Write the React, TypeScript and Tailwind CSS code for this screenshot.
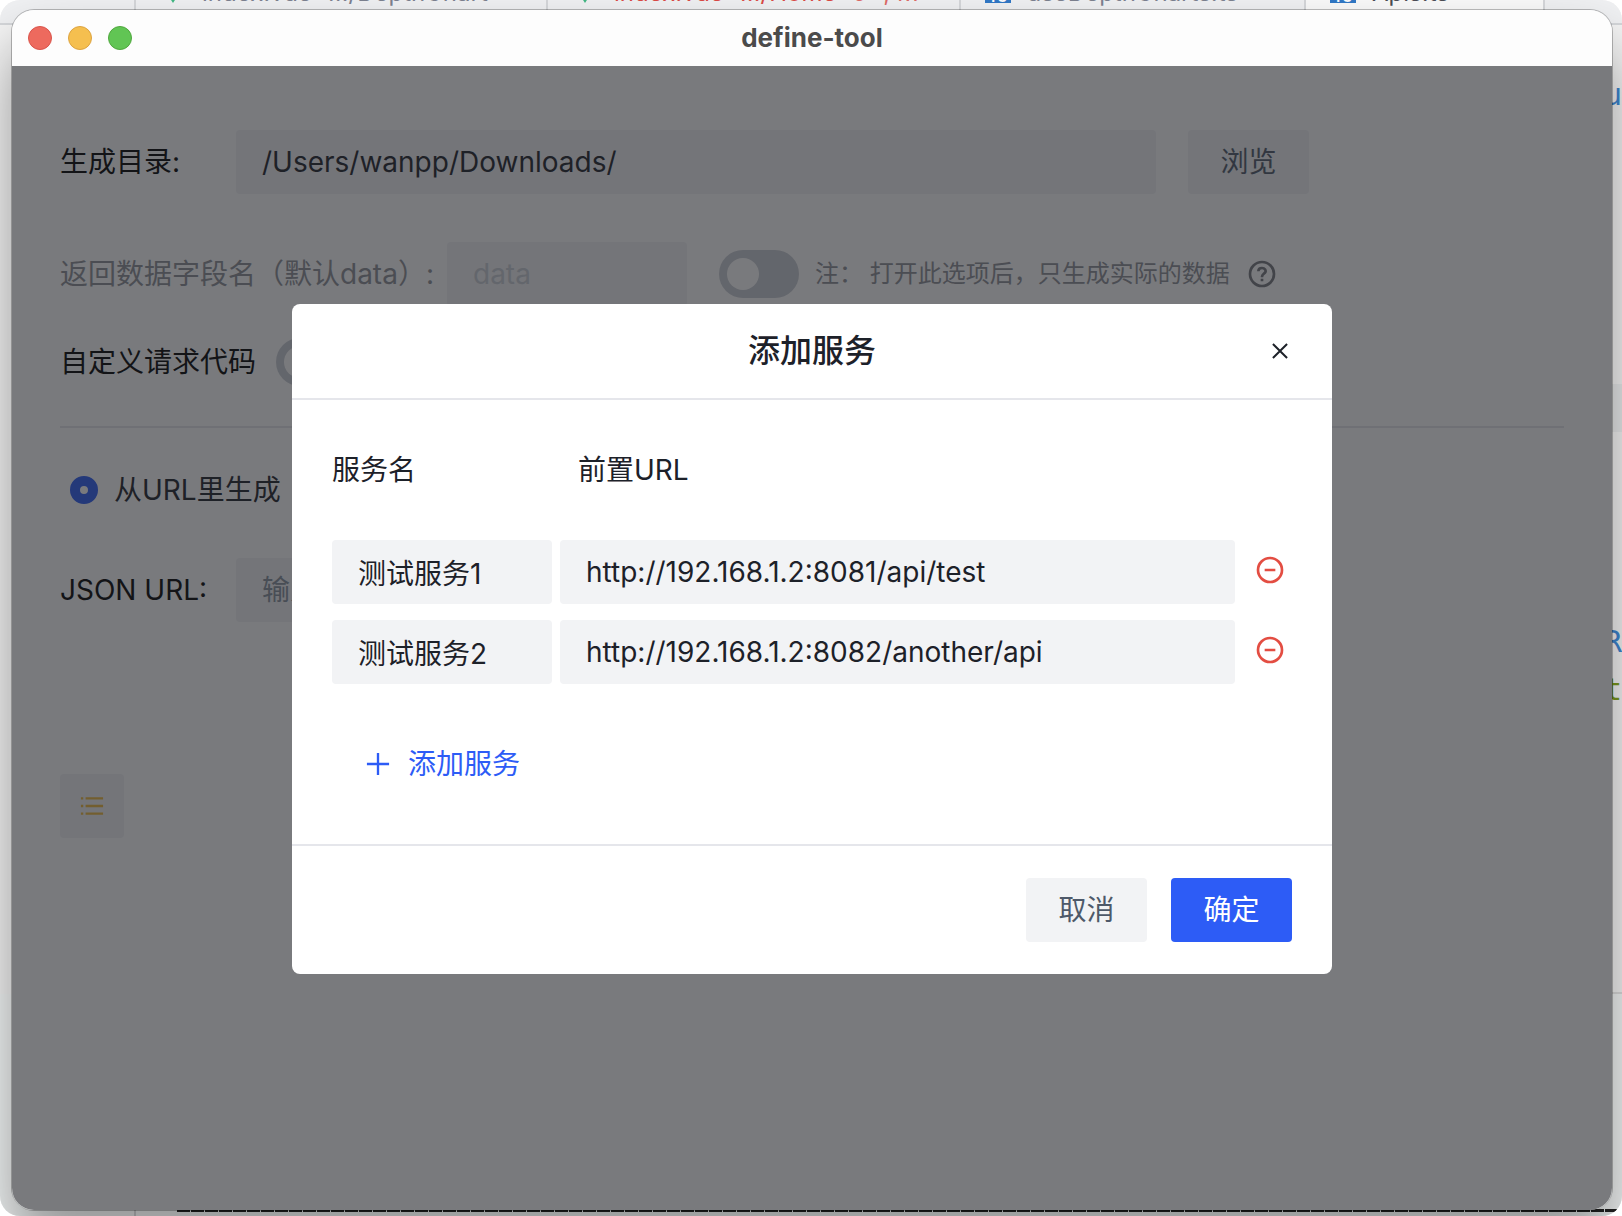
import React, { useState } from "react";

type Service = {
  name: string;
  url: string;
};

type IconProps = {
  d: string;
  className: string;
};

const ICONS = {
  plus: "M5 24h38M24 5v38",
  close: "M9.857 9.858 24 24m0 0 14.142 14.142M24 24 38.142 9.858M24 24 9.857 38.142",
  minusCircle: "M42 24c0 9.941-8.059 18-18 18S6 33.941 6 24 14.059 6 24 6s18 8.059 18 18ZM32 24H16",
  list: "M13 24h30M5 11h4m4 26h30M13 11h30M5 24h4M5 37h4",
  question:
    "M42 24c0 9.941-8.059 18-18 18S6 33.941 6 24 14.059 6 24 6s18 8.059 18 18ZM24.006 31v4.008m0-6.008L24 28c0-3 3-4 4.78-6.402C30.558 19.195 28.288 15 23.987 15c-4.014 0-5.382 2.548-5.388 4.514v.465",
};

const inputClass = "h-16 rounded bg-[#f2f3f5] px-[26px] text-[#1d2129] outline-none";
const switchClass =
  "h-12 w-20 shrink-0 appearance-none rounded-full bg-[#c9cdd4] p-2 before:block before:size-8 before:rounded-full before:bg-white checked:bg-[#165dff] checked:before:ml-8";

function Icon({ d, className }: IconProps) {
  return (
    <svg viewBox="0 0 48 48" fill="none" stroke="currentColor" strokeWidth="4" className={className} aria-hidden="true">
      <path d={d} />
    </svg>
  );
}

function VueIcon() {
  return (
    <svg viewBox="0 0 26 20" className="h-5 w-[26px]" aria-hidden="true">
      <path d="M0 0h5l8 13 8-13h5L13 20Z" fill="#41b883" />
      <path d="M5 0h5l3 5 3-5h5l-8 13Z" fill="#35495e" />
    </svg>
  );
}

function TsIcon() {
  return <span className="flex h-5 w-[26px] items-end justify-end bg-[#3178c6] px-1 text-sm leading-3 font-bold text-white">TS</span>;
}

// editor window that peeks out around the app window
function Backdrop() {
  return (
    <div className="absolute inset-0 flex flex-col overflow-hidden rounded-[20px] bg-[#f5f5f5]">
      <div className="-mt-[37px] flex h-[62px] shrink-0 border-b-2 border-[#d5d7da] bg-[#f0f1f3] pl-[134px] text-2xl whitespace-nowrap text-[#7d8290]">
        <div className="flex w-[412px] items-center gap-4 border-l-2 border-[#d5d7da] pl-6">
          <VueIcon />
          <span>index.vue</span>
          <span>…/DepthChart</span>
        </div>
        <div className="flex w-[413px] items-center gap-4 border-l-2 border-[#d5d7da] pl-6 text-[#dc4a45]">
          <VueIcon />
          <span>index.vue</span>
          <span>…/Home</span>
          <span className="opacity-80">9+, M</span>
        </div>
        <div className="flex w-[345px] items-center gap-4 border-l-2 border-[#d5d7da] pl-6">
          <TsIcon />
          <span>useDepthCharts.ts</span>
        </div>
        <div className="flex w-[241px] items-center gap-4 border-x-2 border-[#d5d7da] bg-[#fafafa] pl-6 text-[#4b4d55]">
          <TsIcon />
          <span>Apis.ts</span>
        </div>
      </div>
      <div className="flex flex-1 flex-col items-end font-['DejaVu_Sans_Mono',monospace] text-[30px] leading-[48px]">
        <span className="mt-[46px] text-[#3d86d0]">u</span>
        <div className="mt-[265px] h-12 w-1/2 bg-[#e9ebec]"></div>
        <span className="mt-[186px] text-[#3d86d0]">R</span>
        <span className="text-[#7a9a1c]">t</span>
        <div className="mt-auto h-0.5 w-1/2 bg-[#dcdcdc]"></div>
      </div>
      <div className="flex h-[222px] shrink-0 flex-col justify-end bg-[#f3f6f6] pr-1 pl-[134px]">
        <div className="h-[7px] border-l-2 border-[#d0d2d4] pl-[41px]">
          <div className="h-[3px] bg-[repeating-linear-gradient(90deg,#222_0_13px,transparent_13px_14px)]"></div>
        </div>
      </div>
    </div>
  );
}

function SettingsForm() {
  return (
    <form className="px-12 pt-16 text-black">
      <div className="flex h-16 items-center">
        <label htmlFor="dir" className="w-44 shrink-0">生成目录:</label>
        <input id="dir" defaultValue="/Users/wanpp/Downloads/" className={`${inputClass} w-full max-w-[920px]`} />
        <button type="button" className="ml-8 h-16 w-[121px] shrink-0 rounded bg-[#f2f3f5] text-[#4e5969]">浏览</button>
      </div>
      <div className="mt-12 flex h-16 items-center whitespace-nowrap text-[#8d8f96]">
        <label htmlFor="field" className="w-[387px] shrink-0">返回数据字段名（默认data）:</label>
        <input id="field" placeholder="data" className={`${inputClass} w-60 placeholder:text-[#c9cdd4]`} />
        <input id="raw" type="checkbox" role="switch" className={`${switchClass} ml-8`} />
        <label htmlFor="raw" className="ml-4 text-2xl">注： 打开此选项后，只生成实际的数据</label>
        <Icon d={ICONS.question} className="ml-4 size-8 text-[#77787e]" />
      </div>
      <div className="mt-8 flex h-12 items-center gap-5">
        <label htmlFor="custom">自定义请求代码</label>
        <input id="custom" type="checkbox" role="switch" className={switchClass} />
      </div>
      <hr className="mt-10 border-t-2 border-[#e5e6eb]" />
      <div className="mt-8 flex h-[60px] items-center gap-4 pl-[10px] text-[#1d2129]">
        <input id="from-url" type="radio" name="source" defaultChecked className="size-7 appearance-none rounded-full border-[10px] border-[#2b5cf6] bg-white" />
        <label htmlFor="from-url">从URL里生成</label>
      </div>
      <div className="mt-[38px] flex h-16 items-center">
        <label htmlFor="json-url" className="w-44 shrink-0">JSON URL:</label>
        <input id="json-url" placeholder="输入" className={`${inputClass} w-full max-w-[920px] placeholder:text-[#86909c]`} />
      </div>
      <button type="button" aria-label="列表" className="mt-[152px] flex size-16 items-center justify-center rounded bg-[#f2f3f5] text-[#f0b93c]">
        <Icon d={ICONS.list} className="size-7" />
      </button>
    </form>
  );
}

function ServiceDialog() {
  const [services, setServices] = useState<Service[]>([
    { name: "测试服务1", url: "http://192.168.1.2:8081/api/test" },
    { name: "测试服务2", url: "http://192.168.1.2:8082/another/api" },
  ]);

  const update = (index: number, patch: Partial<Service>) =>
    setServices(services.map((s, i) => (i === index ? { ...s, ...patch } : s)));

  return (
    <div role="dialog" aria-labelledby="dialog-title" className="w-full max-w-[1040px] rounded-lg bg-white text-[#1d2129]">
      <header className="flex h-24 items-center border-b-2 border-[#e5e6eb] px-10">
        <span className="w-6"></span>
        <h2 id="dialog-title" className="flex-1 text-center text-[32px] font-medium">添加服务</h2>
        <button type="button" aria-label="关闭">
          <Icon d={ICONS.close} className="size-6" />
        </button>
      </header>
      <div className="px-10 pt-10 pb-12">
        <div className="mb-10 flex h-[60px] items-center">
          <span className="w-[246px]">服务名</span>
          <span>前置URL</span>
        </div>
        <div className="flex flex-col gap-4">
          {services.map((s, i) => (
            <div key={i} className="flex items-center gap-2">
              <input
                aria-label="服务名"
                value={s.name}
                onChange={(e) => update(i, { name: e.target.value })}
                className={`${inputClass} w-[220px]`}
              />
              <input
                aria-label="前置URL"
                value={s.url}
                onChange={(e) => update(i, { url: e.target.value })}
                className={`${inputClass} min-w-0 flex-1`}
              />
              <button
                type="button"
                aria-label="删除"
                onClick={() => setServices(services.filter((_, n) => n !== i))}
                className="mr-[6px] ml-[11px] pb-1 text-[#e34d42]"
              >
                <Icon d={ICONS.minusCircle} className="size-8" />
              </button>
            </div>
          ))}
        </div>
        <button
          type="button"
          onClick={() => setServices([...services, { name: "", url: "" }])}
          className="mt-12 flex h-16 items-center gap-4 px-8 text-[#2d5cf6]"
        >
          <Icon d={ICONS.plus} className="size-7" />
          添加服务
        </button>
      </div>
      <footer className="flex justify-end gap-6 border-t-2 border-[#e5e6eb] px-10 py-8">
        <button type="button" className="h-16 w-[121px] rounded bg-[#f2f3f5] text-[#4e5969]">取消</button>
        <button type="button" className="h-16 w-[121px] rounded bg-[#2d5cf6] text-white">确定</button>
      </footer>
    </div>
  );
}

export default function App() {
  return (
    <div className="relative flex min-h-screen overflow-hidden bg-white pt-[10px] pr-[10px] pb-[6px] pl-3 font-[Inter,'Noto_Sans_CJK_SC',sans-serif] text-[28px] leading-10">
      <Backdrop />
      <div className="absolute inset-0 overflow-hidden rounded-[20px] pt-[10px] pr-[10px] pb-[6px] pl-3">
        <div className="h-full rounded-[20px] shadow-[0_36px_60px_rgba(0,0,0,0.4)]"></div>
      </div>
      <div className="relative flex flex-1 flex-col overflow-hidden rounded-[22px] shadow-[0_0_0_1px_rgba(0,0,0,0.25)]">
        <div className="flex h-14 items-center bg-[#fdfdfd] px-4">
          <div className="flex flex-1 gap-4">
            <span className="size-6 rounded-full border border-[#d9544b] bg-[#ed6a5e]"></span>
            <span className="size-6 rounded-full border border-[#dca341] bg-[#f5bf4f]"></span>
            <span className="size-6 rounded-full border border-[#50a73e] bg-[#61c554]"></span>
          </div>
          <h1 className="text-[26px] font-bold text-[#4b4b4b]">define-tool</h1>
          <div className="flex-1"></div>
        </div>
        <div className="relative flex-1 bg-white">
          <SettingsForm />
          <div className="absolute inset-0 flex items-center justify-center bg-[rgba(32,33,38,0.6)] pt-0.5">
            <ServiceDialog />
          </div>
        </div>
      </div>
    </div>
  );
}
